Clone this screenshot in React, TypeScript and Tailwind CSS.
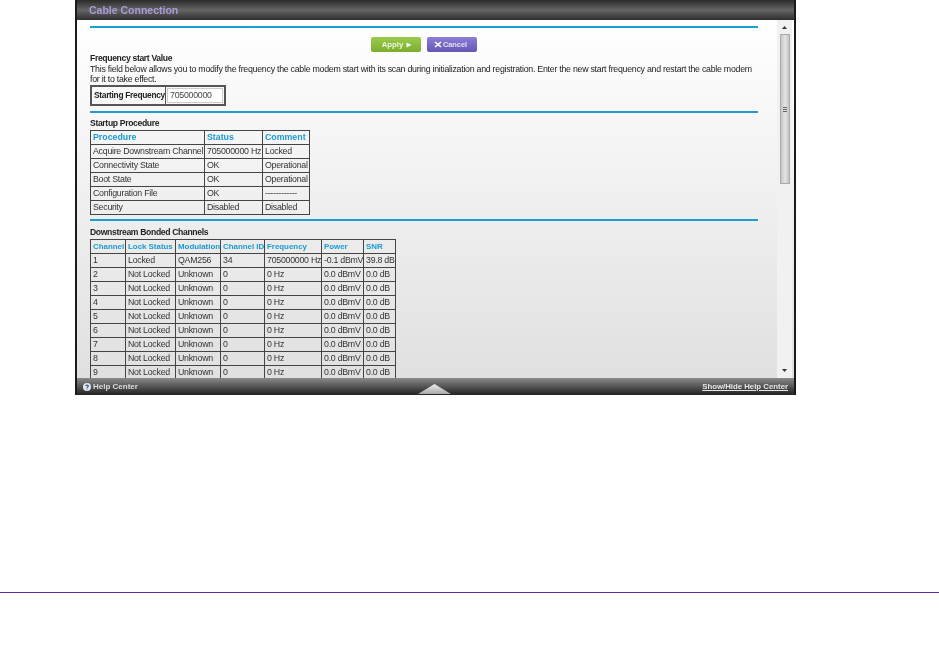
import React from "react";

const startupRows = [
  ["Acquire Downstream Channel", "705000000 Hz", "Locked"],
  ["Connectivity State", "OK", "Operational"],
  ["Boot State", "OK", "Operational"],
  ["Configuration File", "OK", "------------"],
  ["Security", "Disabled", "Disabled"],
];

const channelHeads = ["Channel", "Lock Status", "Modulation", "Channel ID", "Frequency", "Power", "SNR"];
const channelWidths = [35, 50, 45, 44, 57, 42, 32];
const startupWidths = [114, 58, 47];

const channelRows = [
  ["1", "Locked", "QAM256", "34", "705000000 Hz", "-0.1 dBmV", "39.8 dB"],
  ...[2, 3, 4, 5, 6, 7, 8, 9].map((n) => [String(n), "Not Locked", "Unknown", "0", "0 Hz", "0.0 dBmV", "0.0 dB"]),
];

const cell = "border border-[#444] h-[14px] p-0 pl-[2px] align-middle whitespace-nowrap overflow-hidden leading-none";
const head = "border border-[#444] h-[14px] p-0 pl-[2px] align-middle whitespace-nowrap overflow-hidden leading-none font-bold text-[#1a9ad0] text-left";

function Rule() {
  return <div className="h-[2px] w-[668px] bg-[#1a9fd0]" />;
}

function DataTable({ heads, widths, rows, headSize }: { heads: string[]; widths: number[]; rows: string[][]; headSize: string }) {
  return (
    <table className="table-fixed border-collapse text-[8.8px] tracking-[-0.26px] text-[#333]" style={{ width: widths.reduce((a, b) => a + b, 0) }}>
      <colgroup>
        {widths.map((w, i) => (
          <col key={i} style={{ width: w }} />
        ))}
      </colgroup>
      <thead>
        <tr>
          {heads.map((h) => (
            <th key={h} className={`${head} ${headSize}`}>{h}</th>
          ))}
        </tr>
      </thead>
      <tbody>
        {rows.map((r, i) => (
          <tr key={i}>
            {r.map((c, j) => (
              <td key={j} className={cell}>{c}</td>
            ))}
          </tr>
        ))}
      </tbody>
    </table>
  );
}

export default function App() {
  return (
    <div className="h-[662px] w-[939px] bg-white overflow-hidden font-['Liberation_Sans',Arial,sans-serif]">
      <div className="ml-[75px] w-[721px] h-[395px] flex flex-col bg-[#1a1a1a] border-x-2 border-[#1a1a1a] blur-[0.35px]">
        {/* Title bar */}
        <div className="h-[20px] shrink-0 flex items-center pl-[12px] pt-[1px] bg-gradient-to-b from-[#2a2a2a] via-[#666] to-[#2e2e2e] text-[10.5px] font-bold text-[#a99bd8]">
          Cable Connection
        </div>

        <div className="flex-1 min-h-0 flex bg-gradient-to-b from-white to-[#e0e0e0]">
          {/* Content */}
          <div className="flex-1 min-w-0 overflow-hidden pl-[13px] pt-[6px] text-[8.8px] tracking-[-0.26px] text-[#222]">
            <Rule />
            <div className="w-[668px] h-[15px] mt-[9px] flex justify-end pr-[281px] gap-[6px] tracking-normal">
              <div className="w-[50px] h-[15px] pl-[2px] rounded-[2px] bg-gradient-to-b from-[#9ccb4a] to-[#7aae30] flex items-center justify-center text-[#eef6dd] font-bold text-[7.8px]">
                Apply
                <svg width="6" height="6" viewBox="0 0 6 6" className="ml-[3px]"><path d="M0.5 0.5L5.5 3L0.5 5.5Z" fill="#fff" /></svg>
              </div>
              <div className="w-[50px] h-[15px] pr-[3px] rounded-[2px] bg-gradient-to-b from-[#8b7fd6] to-[#6555b5] flex items-center justify-center text-[#e4e0f6] font-bold text-[7.4px]">
                <svg width="8" height="7" viewBox="0 0 8 7" className="mr-[1px]"><path d="M1 1L7 6M7 1L1 6" stroke="#fff" strokeWidth="1.6" /></svg>
                Cancel
              </div>
            </div>
            <div className="mt-[1px] font-bold text-[8.6px] tracking-[-0.34px] leading-[10px]">Frequency start Value</div>
            <p className="w-[668px] mt-[1px] leading-[10px]">
              This field below allows you to modify the frequency the cable modem start with its scan during initialization and registration. Enter the new start frequency and restart the cable modem for it to take effect.
            </p>
            <div className="mt-[1px] w-[136px] h-[21px] flex border-2 border-[#555]">
              <div className="w-[74px] shrink-0 flex items-center pl-[2px] font-bold text-[8.4px] tracking-[-0.3px] border-r border-[#555] whitespace-nowrap">Starting Frequency</div>
              <div className="flex-1 m-[1px] bg-white border border-[#ccc] flex items-center pl-[2px] text-[#444]">705000000</div>
            </div>
            <div className="mt-[5px]"><Rule /></div>
            <div className="mt-[5px] mb-[2px] font-bold text-[8.6px] tracking-[-0.34px] leading-[10px]">Startup Procedure</div>
            <DataTable heads={["Procedure", "Status", "Comment"]} widths={startupWidths} rows={startupRows} headSize="text-[8.8px] tracking-normal" />
            <div className="mt-[4px]"><Rule /></div>
            <div className="mt-[6px] mb-[2px] font-bold text-[8.6px] tracking-[-0.34px] leading-[10px]">Downstream Bonded Channels</div>
            <DataTable heads={channelHeads} widths={channelWidths} rows={channelRows} headSize="text-[7.9px] tracking-normal" />
          </div>

          {/* Scrollbar */}
          <div className="w-[15px] shrink-0 mr-[2px] flex flex-col items-center bg-[#f1f1f1]">
            <svg width="7" height="14" viewBox="0 0 7 14"><path d="M1 9L3.5 6L6 9Z" fill="#333" /></svg>
            <div className="w-[10px] h-[150px] border border-[#aaa] bg-gradient-to-r from-[#c4c4c4] via-[#e4e4e4] to-[#c4c4c4] flex flex-col items-center justify-center gap-[1px]">
              <div className="w-[4px] h-px bg-[#666]" />
              <div className="w-[4px] h-px bg-[#666]" />
              <div className="w-[4px] h-px bg-[#666]" />
            </div>
            <div className="flex-1" />
            <svg width="7" height="14" viewBox="0 0 7 14"><path d="M1 5L3.5 8L6 5Z" fill="#333" /></svg>
          </div>
        </div>

        {/* Help bar */}
        <div className="h-[17px] shrink-0 flex items-center justify-between relative pl-[6px] pr-[6px] bg-gradient-to-b from-[#8a8a8a] via-[#555] to-[#222] text-[8px] font-bold">
          <div className="flex items-center gap-[2px] text-[#ddd]">
            <svg width="8" height="8" viewBox="0 0 9 9">
              <circle cx="4.5" cy="4.5" r="4.5" fill="#dfe6ee" />
              <path d="M3 3.5C3 2 6 2 6 3.5C6 4.5 4.5 4.4 4.5 5.6" stroke="#35507a" strokeWidth="1.2" fill="none" />
              <rect x="4" y="6.4" width="1.1" height="1.1" fill="#35507a" />
            </svg>
            Help Center
          </div>
          <div className="absolute left-[341px] bottom-[1px]">
            <svg width="33" height="10" viewBox="0 0 33 10">
              <defs>
                <linearGradient id="tri" x1="0" y1="0" x2="0" y2="1">
                  <stop offset="0" stopColor="#f0f0f0" />
                  <stop offset="1" stopColor="#a8a8a8" />
                </linearGradient>
              </defs>
              <path d="M0 10L16.5 0L33 10Z" fill="url(#tri)" />
            </svg>
          </div>
          <div className="text-[7.8px] text-[#e8e8e8] underline">Show/Hide Help Center</div>
        </div>
      </div>

      <div className="mt-[197px] h-px bg-[#5b2a9d]" />
    </div>
  );
}
